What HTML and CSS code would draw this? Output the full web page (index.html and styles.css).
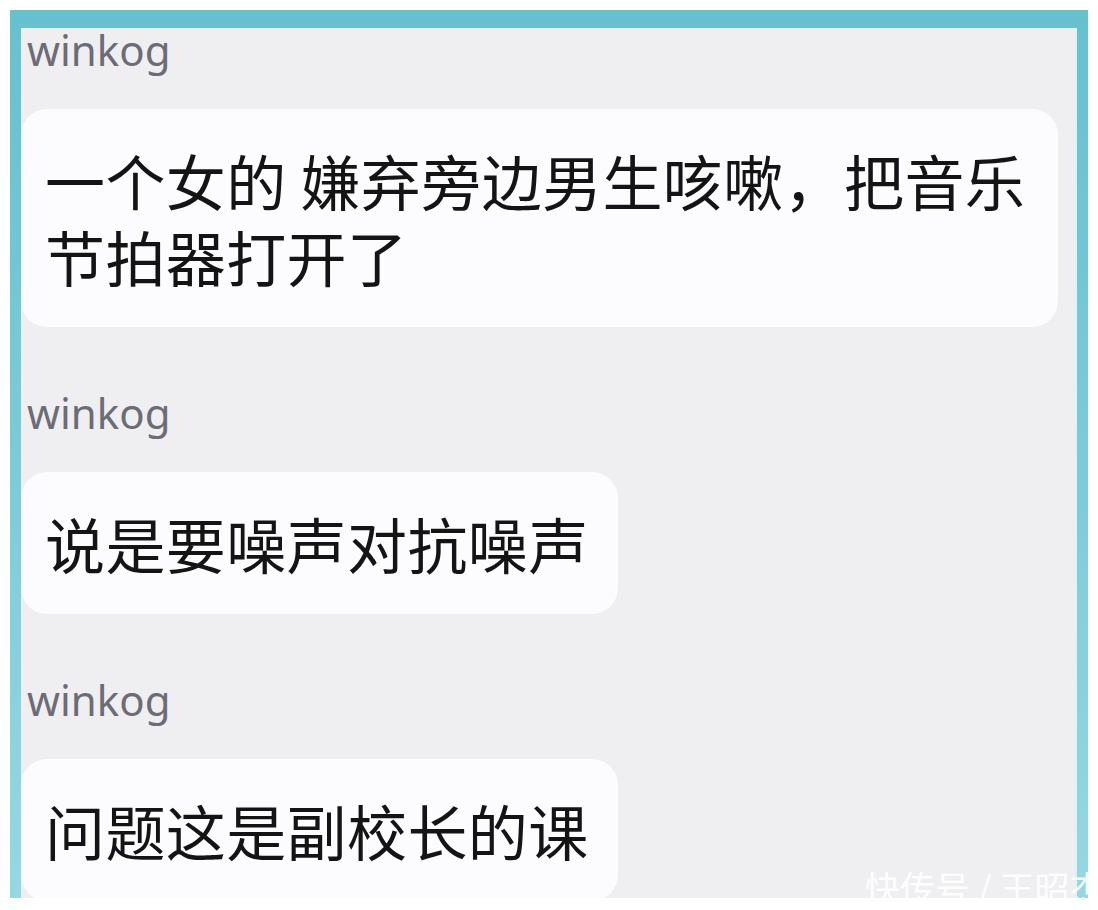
FILE: index.html
```html
<!DOCTYPE html>
<html lang="zh-CN">
<head>
<meta charset="utf-8">
<title>winkog</title>
<link rel="stylesheet" href="styles.css">
</head>
<body>
<div class="frame">
  <div class="screen">
    <div class="msg">
      <div class="name">winkog</div>
      <div class="bubble">一个女的 嫌弃旁边男生咳嗽，把音乐节拍器打开了</div>
    </div>
    <div class="msg">
      <div class="name">winkog</div>
      <div class="bubble">说是要噪声对抗噪声</div>
    </div>
    <div class="msg">
      <div class="name">winkog</div>
      <div class="bubble">问题这是副校长的课</div>
    </div>
  </div>
</div>
<div class="watermark">快传号 / 王昭杰</div>
</body>
</html>
```

FILE: styles.css
```css
html, body {
  margin: 0;
  padding: 0;
  background: #ffffff;
  overflow: hidden;
  width: 1098px;
  height: 910px;
}

body {
  padding: 10px 0 0 10px;
  box-sizing: border-box;
  position: relative;
}

.frame {
  width: 1078px;
  height: 888px;
  box-sizing: border-box;
  padding: 18px 11px 0 11px;
  background: linear-gradient(180deg, #66c1cf 0%, #7ccbd7 50%, #95d8e2 100%);
}

.screen {
  height: 100%;
  background: #efeff1;
  border-right: 2px solid #dff2f5;
  clip-path: inset(-30px 0 0 0);
  display: flex;
  flex-direction: column;
  gap: 64px;
}

.msg {
  display: flex;
  flex-direction: column;
  align-items: flex-start;
}

.name {
  font-family: "Noto Sans", "Open Sans", sans-serif;
  font-size: 42px;
  line-height: 44px;
  color: #6c6c76;
  padding-left: 6px;
  margin-bottom: 37px;
}

.bubble {
  font-family: "Noto Sans CJK SC", "Noto Sans", sans-serif;
  font-size: 60px;
  line-height: 76px;
  letter-spacing: 0.4px;
  color: #141414;
  background: #fcfcfe;
  border-radius: 26px;
  padding: 33px 29px 33px 24px;
  max-width: 1037px;
  box-sizing: border-box;
}

.watermark {
  position: absolute;
  left: 865px;
  top: 866px;
  font-family: "Noto Sans CJK SC", sans-serif;
  font-size: 35px;
  line-height: 42px;
  color: rgba(255, 255, 255, 0.9);
  white-space: nowrap;
}
```
